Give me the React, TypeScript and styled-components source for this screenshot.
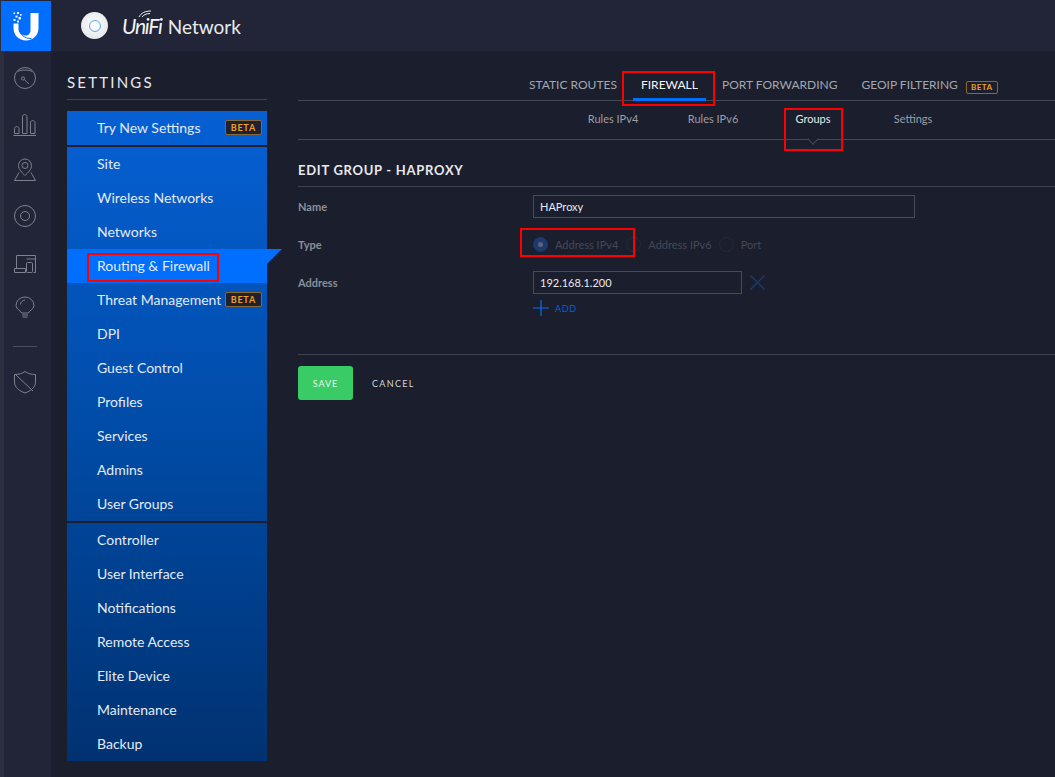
import styled, { createGlobalStyle } from "styled-components";

const GlobalStyle = createGlobalStyle`
  html, body {
    margin: 0;
    padding: 0;
    height: 100%;
    background: #1b1e2d;
  }
  body {
    font-family: Lato, "Liberation Sans", sans-serif;
    overflow: hidden;
  }
`;

const Page = styled.div`
  display: flex;
  width: 1055px;
  height: 777px;
  background: #1b1e2d;
  overflow: hidden;
`;

const Rail = styled.nav`
  width: 51px;
  flex: none;
  display: flex;
  flex-direction: column;
  align-items: center;
  background: linear-gradient(90deg, #2b2f40 0 4px, #222538 4px);
`;

const LogoTile = styled.div`
  width: 50px;
  height: 50px;
  margin: 1px 0 0 1px;
  background: #006fff;
  display: flex;
  align-items: center;
  justify-content: center;
`;

const RailList = styled.div`
  display: flex;
  flex-direction: column;
  align-items: center;
  padding: 4px 1px 0 0;
`;

const RailIcon = styled.div`
  width: 46px;
  height: 46px;
  display: flex;
  align-items: center;
  justify-content: center;
  color: #7d818d;

  svg {
    display: block;
    fill: none;
    stroke: currentColor;
    stroke-width: 1;
  }
`;

const RailDivider = styled.div`
  width: 24px;
  height: 1px;
  background: #4a4e5c;
  margin: 15px 0 12px;
`;

const Body = styled.div`
  flex: 1;
  min-width: 0;
  display: flex;
  flex-direction: column;
`;

const TopBar = styled.header`
  height: 51px;
  flex: none;
  display: flex;
  align-items: center;
  padding-left: 30px;
  background: #222538;
`;

const Disc = styled.div`
  width: 27px;
  height: 27px;
  border-radius: 50%;
  background: radial-gradient(circle at 50% 45%, #ffffff, #e6e8ec 75%, #c9ccd2);
  display: flex;
  align-items: center;
  justify-content: center;
  margin-right: 14px;

  &::after {
    content: "";
    width: 10px;
    height: 10px;
    border-radius: 50%;
    border: 1.5px solid #5aa9f0;
  }
`;

const Brand = styled.div`
  display: flex;
  align-items: baseline;
  color: #e9eaee;
  font-size: 19px;
  font-weight: 400;
  position: relative;
`;

const BrandItalic = styled.span`
  font-style: italic;
  font-weight: 400;
  font-size: 21px;
  margin-right: 6px;
  letter-spacing: -1.2px;
  color: #f4f5f7;
`;

const Wifi = styled.svg`
  position: absolute;
  left: 16px;
  top: -3px;
  fill: none;
  stroke: #f1f2f4;
  stroke-width: 1;
`;

const Columns = styled.div`
  flex: 1;
  min-height: 0;
  display: flex;
  padding-left: 16px;
`;

const Side = styled.aside`
  width: 200px;
  flex: none;
  margin-right: 31px;
`;

const SideTitle = styled.h2`
  margin: 0;
  height: 49px;
  box-sizing: border-box;
  padding-top: 22px;
  border-bottom: 1px solid #3f4450;
  font-size: 15px;
  line-height: 19px;
  font-weight: 400;
  letter-spacing: 2.2px;
  color: #e8e9ec;
`;

const SideMenu = styled.div`
  margin-top: 11px;
  background: linear-gradient(180deg, #0660d4 0%, #004ba6 50%, #003271 100%);
`;

const SideGroup = styled.div`
  & + & {
    border-top: 2px solid #1b1e2d;
  }
`;

const SideItem = styled.div<{ $active?: boolean }>`
  position: relative;
  height: 34px;
  box-sizing: border-box;
  display: flex;
  align-items: center;
  justify-content: space-between;
  padding: 0 5px 2px 30px;
  font-size: 14px;
  color: #e3ebf7;
  background: ${(p) => (p.$active ? "#006fff" : "transparent")};

  ${(p) =>
    p.$active &&
    `
    &::after {
      content: "";
      position: absolute;
      left: 100%;
      top: 0;
      border-top: 15px solid #006fff;
      border-right: 15px solid transparent;
    }
  `}
`;

const Beta = styled.span<{ $outline?: boolean }>`
  display: inline-block;
  box-sizing: border-box;
  height: ${(p) => (p.$outline ? "13px" : "15px")};
  line-height: ${(p) => (p.$outline ? "11px" : "13px")};
  padding: 0 ${(p) => (p.$outline ? "4px" : "5px")};
  border: 1px solid #8a6a32;
  border-radius: 2px;
  background: ${(p) => (p.$outline ? "transparent" : "#1f2030")};
  color: #f0a020;
  font-size: ${(p) => (p.$outline ? "8px" : "9px")};
  font-weight: 700;
  letter-spacing: ${(p) => (p.$outline ? "0.5px" : "0.8px")};
`;

const Mark = styled.span`
  position: absolute;
  border: 2px solid #ff0000;
  pointer-events: none;
`;

const RoutingMark = styled(Mark)`
  left: 20px;
  top: 4px;
  width: 128px;
  height: 25px;
`;

const Content = styled.main`
  flex: 1;
  min-width: 0;
`;

const TabBar = styled.div`
  height: 50px;
  box-sizing: border-box;
  padding-left: 223px;
  border-bottom: 1px solid #464a52;
  display: flex;
  align-items: flex-start;
  gap: 8px;
`;

const Tab = styled.div<{ $active?: boolean }>`
  position: relative;
  height: 49px;
  box-sizing: border-box;
  padding: 26px 8px 0;
  font-size: 12px;
  line-height: 16px;
  display: flex;
  align-items: flex-start;
  gap: 8px;
  white-space: nowrap;
  color: ${(p) => (p.$active ? "#f4f5f7" : "#a3a7af")};
`;

const TabBeta = styled.span`
  margin-top: 1px;
`;

const TabUnderline = styled.span`
  position: absolute;
  left: 0;
  right: 0;
  bottom: -1px;
  height: 3px;
  background: #006fff;
`;

const FirewallMark = styled(Mark)`
  left: -11px;
  top: 20px;
  width: 89px;
  height: 31px;
`;

const SubBar = styled.div`
  height: 39px;
  box-sizing: border-box;
  padding-left: 265px;
  border-bottom: 1px solid #464a52;
  display: flex;
`;

const SubTab = styled.div<{ $active?: boolean }>`
  position: relative;
  width: 100px;
  padding-top: 11px;
  text-align: center;
  font-size: 11px;
  line-height: 14px;
  color: ${(p) => (p.$active ? "#e8e9ec" : "#9a9ea6")};

  ${(p) =>
    p.$active &&
    `
    &::after {
      content: "";
      position: absolute;
      left: 46px;
      top: 34px;
      width: 8px;
      height: 8px;
      box-sizing: border-box;
      background: #1b1e2d;
      border-right: 1px solid #464a52;
      border-bottom: 1px solid #464a52;
      transform: rotate(45deg);
    }
  `}
`;

const GroupsMark = styled(Mark)`
  left: 21px;
  top: 7px;
  width: 55px;
  height: 39px;
`;

const SectionTitle = styled.h3`
  margin: 22px 0 0;
  height: 24px;
  border-bottom: 1px solid #3f4450;
  font-size: 13px;
  line-height: 17px;
  font-weight: 700;
  letter-spacing: 0.72px;
  color: #e8e9ec;
`;

const FormRow = styled.div<{ $top: number; $height: number }>`
  display: flex;
  align-items: flex-start;
  margin-top: ${(p) => p.$top}px;
  min-height: ${(p) => p.$height}px;
`;

const Label = styled.label`
  width: 235px;
  flex: none;
  font-size: 11px;
  font-weight: 700;
  line-height: 23px;
  color: #8b8f98;
`;

const Field = styled.div<{ $width: number }>`
  width: ${(p) => p.$width}px;
  height: 23px;
  box-sizing: border-box;
  border: 1px solid #474b57;
  padding-left: 6px;
  font-size: 11px;
  line-height: 21px;
  color: #e8e9ec;
`;

const RadioRow = styled.div`
  position: relative;
  display: flex;
  align-items: center;
  height: 23px;
`;

const RadioDot = styled.span<{ $on?: boolean }>`
  width: 15px;
  height: 15px;
  flex: none;
  box-sizing: border-box;
  border-radius: 50%;
  border: 1px solid ${(p) => (p.$on ? "#1c3a6e" : "#272a38")};
  background: ${(p) => (p.$on ? "#1c3a6e" : "transparent")};
  display: flex;
  align-items: center;
  justify-content: center;

  &::after {
    content: "";
    width: 5px;
    height: 5px;
    border-radius: 50%;
    background: ${(p) => (p.$on ? "#5b6478" : "transparent")};
  }
`;

const RadioText = styled.span<{ $gap: number }>`
  margin-left: 7px;
  margin-right: ${(p) => p.$gap}px;
  font-size: 11px;
  color: #454955;
  white-space: nowrap;
`;

const TypeMark = styled(Mark)`
  left: -13px;
  top: -5px;
  width: 111px;
  height: 25px;
`;

const AddressLine = styled.div`
  display: flex;
  align-items: center;
  gap: 8px;
`;

const RemoveIcon = styled.svg`
  display: block;
  fill: none;
  stroke: #123f85;
  stroke-width: 1.2;
`;

const AddLine = styled.div`
  display: flex;
  align-items: center;
  gap: 6px;
  margin-top: 6px;
  height: 16px;
  color: #0a5fd0;
  font-size: 9px;
  letter-spacing: 0.6px;
`;

const PlusIcon = styled.svg`
  display: block;
  fill: none;
  stroke: #0a6cf0;
  stroke-width: 1.2;
`;

const FormFooter = styled.div`
  margin-top: 38px;
  padding-top: 11px;
  border-top: 1px solid #3f4450;
  display: flex;
  align-items: center;
`;

const SaveButton = styled.button`
  width: 55px;
  height: 34px;
  padding: 0;
  border: none;
  border-radius: 3px;
  background: #38cb66;
  color: #e9f8ee;
  font-family: inherit;
  font-size: 9px;
  letter-spacing: 1px;
`;

const CancelButton = styled.button`
  margin-left: 19px;
  padding: 0;
  border: none;
  background: none;
  color: #d4d6da;
  font-family: inherit;
  font-size: 9px;
  letter-spacing: 1.3px;
`;

const menu: { label: string; beta?: boolean; active?: boolean }[][] = [
  [{ label: "Try New Settings", beta: true }],
  [
    { label: "Site" },
    { label: "Wireless Networks" },
    { label: "Networks" },
    { label: "Routing & Firewall", active: true },
    { label: "Threat Management", beta: true },
    { label: "DPI" },
    { label: "Guest Control" },
    { label: "Profiles" },
    { label: "Services" },
    { label: "Admins" },
    { label: "User Groups" },
  ],
  [
    { label: "Controller" },
    { label: "User Interface" },
    { label: "Notifications" },
    { label: "Remote Access" },
    { label: "Elite Device" },
    { label: "Maintenance" },
    { label: "Backup" },
  ],
];

function ULogo() {
  return (
    <svg width="26" height="29" viewBox="0 0 26 29">
      <g fill="#fff">
        <rect x="0.5" y="0.5" width="1.6" height="1.6" />
        <rect x="4" y="0" width="2" height="2" />
        <rect x="7" y="2" width="1.6" height="1.6" />
        <rect x="2.5" y="3.5" width="2" height="2" />
        <rect x="5.5" y="5" width="2.4" height="2.4" />
        <rect x="0.5" y="7" width="2" height="2" />
        <rect x="4" y="8.5" width="2" height="2" />
        <path d="M17.5 1H25.5V16C25.5 23.5 20 28.5 13 28.5C6 28.5 0.5 23.5 0.5 16V11.5H5.5V16C5.5 21 9 23.5 13 23.5C15.5 23.5 17.5 21.5 17.5 18Z" />
      </g>
      <path d="M6 17C7 22.5 11 26.5 18.5 26.5" fill="none" stroke="#006fff" strokeWidth="1" />
    </svg>
  );
}

export default function App() {
  return (
    <Page>
      <GlobalStyle />
      <Rail>
        <LogoTile>
          <ULogo />
        </LogoTile>
        <RailList>
          <RailIcon>
            <svg width="24" height="24" viewBox="0 0 24 24">
              <circle cx="12" cy="12" r="10.5" />
              <path d="M5 5.5C8 3.5 16 3.5 19 5.5" />
              <circle cx="10" cy="12.5" r="1.6" />
              <path d="M11.3 13.6L16 18" />
            </svg>
          </RailIcon>
          <RailIcon>
            <svg width="24" height="24" viewBox="0 0 24 24">
              <path d="M1.5 21.5V16.5C1.5 14 6 14 6 16.5V21.5Z" />
              <path d="M9.5 21.5V4.5C9.5 2 14 2 14 4.5V21.5Z" />
              <path d="M17.5 21.5V10.5C17.5 8 22 8 22 10.5V21.5Z" />
              <path d="M0.5 23.5H23" />
            </svg>
          </RailIcon>
          <RailIcon>
            <svg width="24" height="24" viewBox="0 0 24 24">
              <path d="M12 17.5C9 14.5 5.5 11.5 5.5 7.5A6.5 6.5 0 0 1 18.5 7.5C18.5 11.5 15 14.5 12 17.5Z" />
              <circle cx="12" cy="7.5" r="3" />
              <path d="M6 14.5L1.5 22.5H22.5L18 14.5" />
            </svg>
          </RailIcon>
          <RailIcon>
            <svg width="24" height="24" viewBox="0 0 24 24">
              <circle cx="12" cy="12" r="10.5" />
              <circle cx="12" cy="12" r="4.5" />
            </svg>
          </RailIcon>
          <RailIcon>
            <svg width="24" height="24" viewBox="0 0 24 24">
              <path d="M3.5 18V5.5H22.5V22.5H20.5" />
              <path d="M1.5 18.5H12.5V22.5H1.5Z" />
              <rect x="13.5" y="12.5" width="6" height="10" rx="1" />
              <path d="M13.5 9H22" />
            </svg>
          </RailIcon>
          <RailIcon>
            <svg width="24" height="24" viewBox="0 0 24 24">
              <path d="M8.5 17C8 14.5 3 13.5 3 9.5A9 8.5 0 0 1 21 9.5C21 13.5 16 14.5 15.5 17Z" />
              <path d="M7.5 8.5C7.5 6 9.5 4.5 12 4" />
              <path d="M9 19H15M9.5 21H14.5" />
            </svg>
          </RailIcon>
          <RailDivider />
          <RailIcon>
            <svg width="24" height="24" viewBox="0 0 24 24">
              <path d="M1.5 4.5C6 4.5 9 3.5 12 1.5C15 3.5 18 4.5 22.5 4.5V12C22.5 17.5 17.5 21 12 23C6.5 21 1.5 17.5 1.5 12Z" />
              <path d="M2.5 4.5L20 21" />
            </svg>
          </RailIcon>
        </RailList>
      </Rail>
      <Body>
        <TopBar>
          <Disc />
          <Brand>
            <Wifi width="14" height="8" viewBox="0 0 14 8">
              <path d="M1 7C3 3 7 1 13 1M4 7C5.5 5 8 3.5 12 3.5" />
            </Wifi>
            <BrandItalic>UniFi</BrandItalic>
            Network
          </Brand>
        </TopBar>
        <Columns>
          <Side>
            <SideTitle>SETTINGS</SideTitle>
            <SideMenu>
              {menu.map((group, i) => (
                <SideGroup key={i}>
                  {group.map((item) => (
                    <SideItem key={item.label} $active={item.active}>
                      {item.label}
                      {item.beta && <Beta>BETA</Beta>}
                      {item.active && <RoutingMark />}
                    </SideItem>
                  ))}
                </SideGroup>
              ))}
            </SideMenu>
          </Side>
          <Content>
            <TabBar>
              <Tab>STATIC ROUTES</Tab>
              <Tab $active>
                FIREWALL
                <TabUnderline />
                <FirewallMark />
              </Tab>
              <Tab>PORT FORWARDING</Tab>
              <Tab>
                GEOIP FILTERING
                <TabBeta>
                  <Beta $outline>BETA</Beta>
                </TabBeta>
              </Tab>
            </TabBar>
            <SubBar>
              <SubTab>Rules IPv4</SubTab>
              <SubTab>Rules IPv6</SubTab>
              <SubTab $active>
                Groups
                <GroupsMark />
              </SubTab>
              <SubTab>Settings</SubTab>
            </SubBar>
            <SectionTitle>EDIT GROUP - HAPROXY</SectionTitle>
            <FormRow $top={8} $height={23}>
              <Label>Name</Label>
              <Field $width={382}>HAProxy</Field>
            </FormRow>
            <FormRow $top={15} $height={23}>
              <Label>Type</Label>
              <RadioRow>
                <RadioDot $on />
                <RadioText $gap={8}>Address IPv4</RadioText>
                <RadioDot />
                <RadioText $gap={7}>Address IPv6</RadioText>
                <RadioDot />
                <RadioText $gap={0}>Port</RadioText>
                <TypeMark />
              </RadioRow>
            </FormRow>
            <FormRow $top={15} $height={45}>
              <Label>Address</Label>
              <div>
                <AddressLine>
                  <Field $width={209}>192.168.1.200</Field>
                  <RemoveIcon width="15" height="15" viewBox="0 0 15 15">
                    <path d="M0.5 0.5L14.5 14.5M14.5 0.5L0.5 14.5" />
                  </RemoveIcon>
                </AddressLine>
                <AddLine>
                  <PlusIcon width="16" height="16" viewBox="0 0 16 16">
                    <path d="M8 0V16M0 8H16" />
                  </PlusIcon>
                  ADD
                </AddLine>
              </div>
            </FormRow>
            <FormFooter>
              <SaveButton>SAVE</SaveButton>
              <CancelButton>CANCEL</CancelButton>
            </FormFooter>
          </Content>
        </Columns>
      </Body>
    </Page>
  );
}
